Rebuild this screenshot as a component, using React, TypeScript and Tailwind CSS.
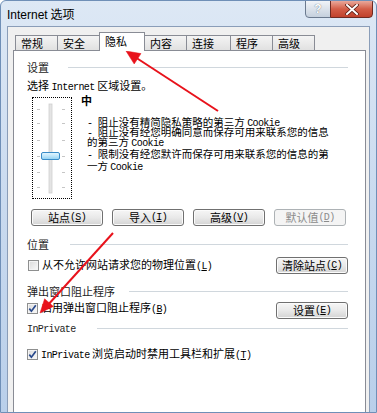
import React from "react";

const tabs = [
  { label: "常规", w: "w-[43px]" },
  { label: "安全", w: "w-[43px]" },
  { label: "隐私", w: "w-[46px]", on: true },
  { label: "内容", w: "w-[43px]" },
  { label: "连接", w: "w-[45px]" },
  { label: "程序", w: "w-[43px]" },
  { label: "高级", w: "w-[43px]" },
];

// Latin runs in the dialog are drawn with a narrow monospace, as SimSun does
function M({ children }: { children: React.ReactNode }) {
  return <span className="font-['Liberation_Mono',monospace] text-[10px] tracking-[-0.6px]">{children}</span>;
}

function Key({ k }: { k: string }) {
  return (
    <M>
      (<span className="underline underline-offset-1">{k}</span>)
    </M>
  );
}

function Btn({ label, k, disabled }: { label: string; k: string; disabled?: boolean }) {
  return (
    <div
      className={
        disabled
          ? "flex h-[17px] w-[72px] items-center justify-center rounded-[3px] border border-[#adb2b5] bg-[#f4f4f4] text-[11px] leading-none text-[#8b8b8b]"
          : "flex h-[17px] w-[72px] items-center justify-center rounded-[3px] border border-[#707070] bg-linear-to-b from-[#f6f6f6] via-[#e9e9e9] to-[#d4d4d4] text-[11px] leading-none text-black shadow-[inset_0_0_0_1px_#fbfbfb]"
      }
    >
      {label}
      <Key k={k} />
    </div>
  );
}

function Check({ on }: { on?: boolean }) {
  return (
    <span className="flex h-[11px] w-[11px] shrink-0 items-center justify-center border border-[#8e8f8f] bg-linear-to-br from-[#dadada] to-[#fafafa] shadow-[inset_0_0_0_1px_#f4f4f4]">
      {on && (
        <svg width="9" height="9" viewBox="0 0 9 9">
          <path d="M1.3 4.6 L3.4 7.2 L7.8 1.2" fill="none" stroke="#2a4a8c" strokeWidth="1.7" />
        </svg>
      )}
    </span>
  );
}

function Group({ children, gap }: { children: React.ReactNode; gap: string }) {
  return (
    <div className="flex h-[14px] items-center text-[11px] leading-[14px] text-[#1e1e1e]">
      <span>{children}</span>
      <div className={`h-px flex-1 bg-[#d0d7dd] ${gap}`} />
    </div>
  );
}

function Slider() {
  return (
    <div className="h-[102px] w-[40px] shrink-0 border border-dotted border-black">
      <svg width="38" height="100" viewBox="0 0 38 100">
        <defs>
          <linearGradient id="thumb" x1="0" y1="0" x2="0" y2="1">
            <stop offset="0" stopColor="#e6f7ff" />
            <stop offset="0.5" stopColor="#bfe6fa" />
            <stop offset="1" stopColor="#8fd0f2" />
          </linearGradient>
        </defs>
        <rect x="16" y="6" width="3" height="89" fill="#e4e4e4" stroke="#cfcfcf" strokeWidth="0.8" />
        {[11, 25, 42, 58, 74, 89].map((y) => (
          <g key={y} fill="#c6c6c6">
            <rect x="4" y={y} width="3" height="1" />
            <rect x="29" y={y} width="3" height="1" />
          </g>
        ))}
        <rect x="8.5" y="54.5" width="18" height="7" rx="1.5" fill="url(#thumb)" stroke="#3a8cc8" />
      </svg>
    </div>
  );
}

export default function App() {
  return (
    <div className="relative h-[413px] w-[377px] overflow-hidden rounded-t-[6px] border border-[#6f8fb7] bg-linear-to-b from-[#dde8f5] via-[#c9daef] to-[#b9cfea] font-['Noto_Sans_CJK_SC',sans-serif]">
      {/* title bar */}
      <div className="flex h-[25px] items-start justify-between">
        <div className="pl-[6px] pt-[5px] text-[12px] leading-[16px] text-black">
          <span className="font-['Liberation_Sans',sans-serif]">Internet</span> 选项
        </div>
        <div className="mr-[3px] flex -mt-px">
          <div className="flex h-[18px] w-[26px] items-center justify-center rounded-bl-[4px] border border-[#6b7a8f] bg-linear-to-b from-[#f1f4f8] to-[#c5d0dd] font-['Liberation_Sans',sans-serif] text-[12px] font-bold text-white [text-shadow:0_0_1px_#3d4a5c]">
            ?
          </div>
          <div className="-ml-px flex h-[18px] w-[43px] items-center justify-center rounded-br-[4px] border border-[#6e2a22] bg-linear-to-b from-[#e9a89b] via-[#d35d47] to-[#c0412c]">
            <svg width="14" height="11" viewBox="0 0 14 11">
              <path d="M2 1 L12 10 M12 1 L2 10" stroke="#5a1b12" strokeWidth="3.6" strokeLinecap="square" />
              <path d="M2 1 L12 10 M12 1 L2 10" stroke="#ffffff" strokeWidth="2" strokeLinecap="square" />
            </svg>
          </div>
        </div>
      </div>

      {/* client area */}
      <div className="ml-[6px] mr-[6px] flex h-[400px] flex-col border border-[#8a9db8] bg-[#f0f0f0]">
        <div className="ml-[7px] mt-[5px] flex h-[18px] items-end text-[11px] leading-none text-black">
          {tabs.map((t, i) =>
            t.on ? (
              <div
                key={t.label}
                className={`${t.w} relative z-10 -mb-px ${i ? "-ml-px" : ""} flex h-[19px] items-start border border-b-0 border-[#898c95] bg-white pl-[5px] pt-[3px]`}
              >
                {t.label}
              </div>
            ) : (
              <div
                key={t.label}
                className={`${t.w} ${i ? "-ml-px" : ""} flex h-[15px] items-center border border-b-0 border-[#898c95] bg-linear-to-b from-[#f4f4f4] to-[#e1e1e1] pl-[5px]`}
              >
                {t.label}
              </div>
            )
          )}
        </div>

        <div className="ml-[5px] mr-[3px] flex flex-1 flex-col border border-[#898c95] bg-white pl-[13px] pr-[17px] text-[11px] text-black">
          <div className="mt-[9px]">
            <Group gap="ml-[19px]">设置</Group>
          </div>
          <div className="mt-[4px] h-[14px] leading-[14px]">
            选择 <M>Internet</M> 区域设置。
          </div>

          <div className="mt-[5px] flex h-[102px]">
            <div className="ml-[5px]">
              <Slider />
            </div>
            <div className="ml-[9px] flex flex-col">
              <div className="-mt-[3px] h-[12px] text-[11px] font-bold leading-[12px]">中</div>
              <div className="ml-[6px] mt-[11px] flex flex-col whitespace-nowrap text-[10.5px]">
                <div className="h-[10px] leading-[10px]">
                  <M>- </M>阻止没有精简隐私策略的第三方 <M>Cookie</M>
                </div>
                <div className="h-[10px] leading-[10px]">
                  <M>- </M>阻止没有经您明确同意而保存可用来联系您的信息
                </div>
                <div className="h-[10px] leading-[10px]">
                  的第三方 <M>Cookie</M>
                </div>
                <div className="mt-[1px] h-[12px] leading-[12px]">
                  <M>- </M>限制没有经您默许而保存可用来联系您的信息的第
                </div>
                <div className="h-[12px] leading-[12px]">
                  一方 <M>Cookie</M>
                </div>
              </div>
            </div>
          </div>

          <div className="ml-[4px] mt-[10px] flex gap-[9px]">
            <Btn label="站点" k="S" />
            <Btn label="导入" k="I" />
            <Btn label="高级" k="V" />
            <Btn label="默认值" k="D" disabled />
          </div>

          <div className="mt-[11px]">
            <Group gap="ml-[21px]">位置</Group>
          </div>
          <div className="mt-[6px] flex h-[17px] items-center justify-between">
            <div className="ml-px flex items-center gap-[3px] leading-[12px]">
              <Check />
              <span>
                从不允许网站请求您的物理位置<Key k="L" />
              </span>
            </div>
            <Btn label="清除站点" k="C" />
          </div>

          <div className="mt-[10px]">
            <Group gap="ml-[14px]">弹出窗口阻止程序</Group>
          </div>
          <div className="mt-[4px] flex h-[17px] items-start justify-between">
            <div className="flex h-[12px] items-center gap-[3px] leading-[12px]">
              <Check on />
              <span>
                启用弹出窗口阻止程序<Key k="B" />
              </span>
            </div>
            <Btn label="设置" k="E" />
          </div>

          <div className="mt-[2px]">
            <Group gap="ml-[21px]">
              <M>InPrivate</M>
            </Group>
          </div>
          <div className="mt-[13px] flex h-[12px] items-center gap-[3px] leading-[12px]">
            <Check on />
            <span>
              <M>InPrivate</M> 浏览启动时禁用工具栏和扩展<Key k="T" />
            </span>
          </div>
        </div>
      </div>

      {/* red annotation arrows */}
      <svg className="pointer-events-none absolute left-0 top-0" width="377" height="413" viewBox="0 0 377 413">
        <g fill="#e8121b" stroke="#e8121b">
          <line x1="217" y1="110" x2="134" y2="56" strokeWidth="2" />
          <polygon points="125,50 140,52.6 133.2,63" strokeWidth="0.5" />
          <line x1="112" y1="232" x2="46" y2="305" strokeWidth="2" />
          <polygon points="39,312 52.4,305.4 43.6,297.8" strokeWidth="0.5" />
        </g>
      </svg>
    </div>
  );
}
